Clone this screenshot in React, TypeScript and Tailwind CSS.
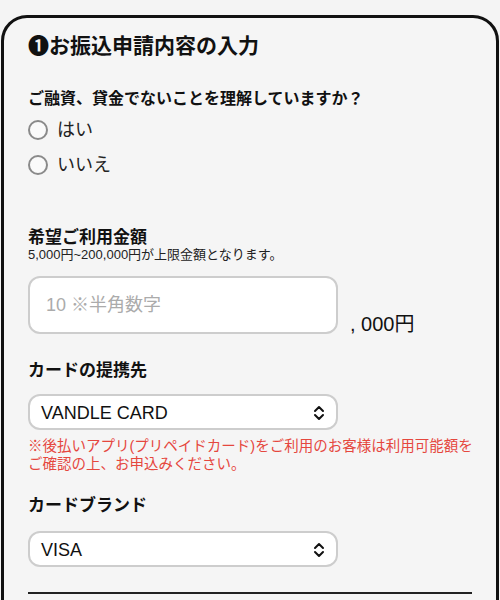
const font = { fontFamily: "'Liberation Sans', 'Noto Sans CJK JP', sans-serif" };

function Chevrons() {
  return (
    <svg width="12" height="18" viewBox="0 0 12 18" fill="none" stroke="#111" strokeWidth="2" strokeLinecap="round" strokeLinejoin="round">
      <path d="M2 7 L6 3 L10 7" />
      <path d="M2 11 L6 15 L10 11" />
    </svg>
  );
}

function Radio({ label }: { label: string }) {
  return (
    <label className="flex h-[35px] items-center gap-[9px]">
      <span className="h-[20px] w-[20px] rounded-full border-2 border-[#8a8a8a] bg-[#fafafa]" />
      <span className="text-[18px] leading-6 text-[#222]">{label}</span>
    </label>
  );
}

function Select({ value }: { value: string }) {
  return (
    <div className="flex h-[36px] w-[310px] items-center justify-between rounded-[12px] border-2 border-[#cdcdcd] bg-white pl-[11px] pr-[11px] pt-[2px]">
      <span className="text-[18px] leading-6 text-[#111]">{value}</span>
      <Chevrons />
    </div>
  );
}

export default function App() {
  return (
    <div className="h-[600px] w-[500px] overflow-hidden bg-[#f4f4f4] pt-[15px]" style={font}>
      <div className="mx-[1px] h-[620px] rounded-[26px] border-[3px] border-[#111] bg-[#f5f5f5] px-[24px] pt-[14px]">
        <h1 className="text-[21px] font-bold leading-[28px] text-[#111]">❶お振込申請内容の入力</h1>

        <p className="mt-[27px] text-[16px] font-bold leading-6 text-[#111]">ご融資、貸金でないことを理解していますか？</p>
        <div className="mt-[1px]">
          <Radio label="はい" />
          <Radio label="いいえ" />
        </div>

        <p className="mt-[46px] text-[17px] font-bold leading-5 text-[#111]">希望ご利用金額</p>
        <p className="text-[13px] leading-[14px] text-[#222]">5,000円~200,000円が上限金額となります。</p>
        <div className="mt-[14px] flex items-end gap-[12px]">
          <div className="flex h-[58px] w-[310px] items-center rounded-[12px] border-2 border-[#cdcdcd] bg-white pl-[16px]">
            <span className="text-[18px] text-[#ababab]">10 ※半角数字</span>
          </div>
          <span className="text-[20px] leading-[20px] text-[#111]">, 000円</span>
        </div>

        <p className="mt-[26px] text-[17px] font-bold leading-[22px] text-[#111]">カードの提携先</p>
        <div className="mt-[12px]">
          <Select value="VANDLE CARD" />
        </div>
        <p className="mt-[7px] whitespace-nowrap text-[14.5px] leading-[18px] text-[#e5473e]">
          ※後払いアプリ(プリペイドカード)をご利用のお客様は利用可能額を
          <br />
          ご確認の上、お申込みください。
        </p>

        <p className="mt-[22px] text-[17px] font-bold leading-[22px] text-[#111]">カードブランド</p>
        <div className="mt-[14px]">
          <Select value="VISA" />
        </div>

        <div className="mt-[25px] h-[2px] bg-[#222]" />
      </div>
    </div>
  );
}
